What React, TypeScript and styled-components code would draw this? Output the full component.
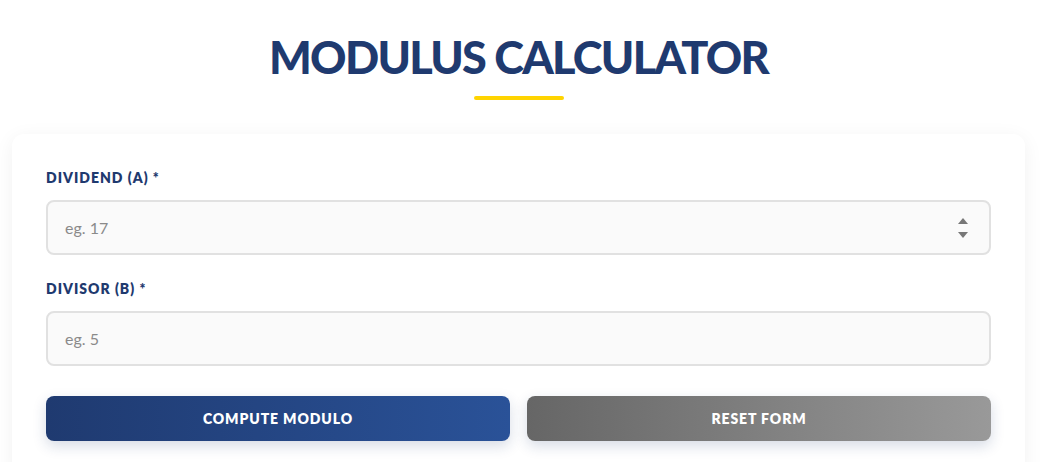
import React from "react";
import styled, { createGlobalStyle } from "styled-components";

const Global = createGlobalStyle`
  html, body { margin: 0; padding: 0; background: #ffffff; }
  body { font-family: "Lato", "Open Sans", sans-serif; }
  * { box-sizing: border-box; }
`;

const Page = styled.div`
  width: 1044px;
  height: 462px;
  overflow: hidden;
  padding: 0 19px 0 12px;
`;

const Header = styled.header`
  display: flex;
  flex-direction: column;
  align-items: center;
  padding-top: 30px;
`;

const Title = styled.h1`
  margin: 0;
  font-family: "Lato", sans-serif;
  font-weight: 900;
  font-size: 45px;
  line-height: 54px;
  letter-spacing: -1.7px;
  color: #1f3a6f;
  text-transform: uppercase;
`;

const Underline = styled.div`
  width: 90px;
  height: 4px;
  border-radius: 2px;
  background: #ffd400;
  margin-top: 12px;
`;

const Card = styled.section`
  margin-top: 34px;
  background: #ffffff;
  border-radius: 12px;
  box-shadow: 0 4px 20px rgba(0, 0, 0, 0.06);
  padding: 34px 34px 40px 34px;
  display: flex;
  flex-direction: column;
`;

const Field = styled.div`
  display: flex;
  flex-direction: column;
  margin-bottom: 24px;
`;

const Label = styled.label`
  font-family: "Lato", sans-serif;
  font-weight: 800;
  font-size: 14px;
  line-height: 20px;
  letter-spacing: 1px;
  color: #1f3a6f;
  margin-bottom: 12px;
`;

const InputWrap = styled.div`
  position: relative;
`;

const Input = styled.input`
  width: 100%;
  height: 55px;
  border: 2px solid #e1e1e1;
  border-radius: 8px;
  background: #fafafa;
  padding: 0 17px;
  font-family: "Lato", sans-serif;
  font-size: 16px;
  color: #333;
  outline: none;
  &::placeholder { color: #8a8a8a; }
`;

const Spinner = styled.svg`
  position: absolute;
  right: 22px;
  top: 17px;
`;

const Buttons = styled.div`
  display: grid;
  grid-template-columns: 1fr 1fr;
  gap: 17px;
  margin-top: 6px;
`;

const Button = styled.button<{ $variant: "primary" | "secondary" }>`
  height: 45px;
  border: none;
  border-radius: 8px;
  color: #ffffff;
  font-family: "Lato", sans-serif;
  font-weight: 800;
  font-size: 14px;
  letter-spacing: 0.9px;
  text-transform: uppercase;
  cursor: pointer;
  background: ${(p) =>
    p.$variant === "primary"
      ? "linear-gradient(90deg, #1f3a70 0%, #2a5298 100%)"
      : "linear-gradient(90deg, #666666 0%, #999999 100%)"};
  box-shadow: 0 5px 14px rgba(30, 58, 110, 0.18);
`;

export default function App() {
  return (
    <Page>
      <Global />
      <Header>
        <Title>Modulus Calculator</Title>
        <Underline />
      </Header>
      <Card>
        <Field>
          <Label>DIVIDEND (A) *</Label>
          <InputWrap>
            <Input type="text" placeholder="eg. 17" />
            <Spinner width="12" height="22" viewBox="0 0 12 22">
              <path d="M6 1 L11 7 L1 7 Z" fill="#777" />
              <path d="M1 15 L11 15 L6 21 Z" fill="#777" />
            </Spinner>
          </InputWrap>
        </Field>
        <Field>
          <Label>DIVISOR (B) *</Label>
          <InputWrap>
            <Input type="text" placeholder="eg. 5" />
          </InputWrap>
        </Field>
        <Buttons>
          <Button $variant="primary">Compute Modulo</Button>
          <Button $variant="secondary">Reset Form</Button>
        </Buttons>
      </Card>
    </Page>
  );
}
